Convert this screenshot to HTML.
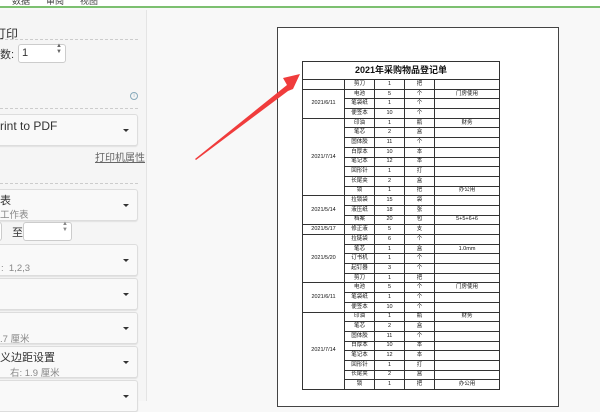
<!DOCTYPE html>
<html><head><meta charset="utf-8"><style>
*{margin:0;padding:0;box-sizing:border-box}
body{width:600px;height:401px;overflow:hidden;background:#f8f8f8;font-family:"Liberation Sans","Noto Sans CJK SC",sans-serif;position:relative}
.top{position:absolute;left:0;top:0;width:600px;height:8px;background:#fff;border-bottom:2px solid #7cc070}
.top span{position:absolute;top:-6px;font-size:9px;color:#444}
.left{position:absolute;left:0;top:10px;width:147px;height:391px;background:#f5f5f5;border-right:1px solid #e4e4e4}
.a{position:absolute;font-size:11px;color:#333;white-space:nowrap}
.s{font-size:9.5px;color:#888}
.dash{position:absolute;left:0;width:138px;border-top:1px dashed #ccc}
.dd{position:absolute;left:-4px;width:142px;height:32px;background:#f9f9f9;border:1px solid #ddd;border-radius:3px;box-shadow:0 1px 1px #e0e0e0}
.dd:after{content:"";position:absolute;right:8px;top:14px;border:3px solid transparent;border-top:3px solid #333}
.inp{position:absolute;background:#fff;border:1px solid #ccc;border-radius:3px}
.page{position:absolute;left:277px;top:27px;width:282px;height:380px;background:#fff;border:1px solid #444}
table{position:absolute;left:302px;top:61px;border-collapse:collapse;font-size:5.5px;color:#111;font-family:"Liberation Sans","Noto Sans CJK SC",sans-serif}
td{border:1px solid #333;height:9.69px;text-align:center;padding:0;line-height:7px}
.t{height:18px;font-size:9px;font-weight:bold}
</style></head><body>
<div class="top"><span style="left:12px">数据</span><span style="left:46px">审阅</span><span style="left:80px">视图</span></div>
<div class="left">
<div class="a" style="left:-6px;top:15px;font-size:12px">打印</div>
<div class="dash" style="top:29px"></div>
<div class="a" style="left:0;top:36px">数:</div>
<div class="inp" style="left:18px;top:34px;width:48px;height:19px"><span class="a" style="left:3px;top:2px">1</span><span class="a" style="right:3px;top:-2px;font-size:6px;color:#666">▲<br>▼</span></div>
<div class="a" style="left:130px;top:82px;width:8px;height:8px;border:1px solid #8ab;border-radius:50%;font-size:5px;color:#8ab;text-align:center;line-height:6px">i</div>
<div class="dash" style="top:98px"></div>
<div class="dd" style="top:104px"><span class="a" style="left:3px;top:4px;font-size:12px">rint to PDF</span></div>
<div class="a" style="left:95px;top:139px;font-size:10px;color:#666;text-decoration:underline">打印机属性</div>
<div class="dash" style="top:173px"></div>
<div class="dd" style="top:179px"><span class="a" style="left:3px;top:2px">表</span><span class="a s" style="left:3px;top:17px">工作表</span></div>
<div class="inp" style="left:-4px;top:212px;width:6px;height:19px"></div>
<div class="a" style="left:12px;top:214px">至</div>
<div class="inp" style="left:23px;top:212px;width:49px;height:19px"><span class="a" style="right:3px;top:-2px;font-size:6px;color:#888">▲<br>▼</span></div>
<div class="dd" style="top:234px"><span class="a s" style="left:4px;top:18px">: &nbsp;1,2,3</span></div>
<div class="dd" style="top:268px"></div>
<div class="dd" style="top:302px"><span class="a s" style="left:3px;top:18px">.7 厘米</span></div>
<div class="dd" style="top:336px"><span class="a" style="left:3px;top:2px">义边距设置</span><span class="a s" style="left:13px;top:18px">右: 1.9 厘米</span></div>
<div class="dd" style="top:370px"></div>
</div>
<div class="page"></div>
<table>
<colgroup><col style="width:42px"><col style="width:30px"><col style="width:30px"><col style="width:30px"><col style="width:65px"></colgroup>
<tr><td colspan="5" class="t">2021年采购物品登记单</td></tr>
<tr><td></td><td>剪刀</td><td>1</td><td>把</td><td></td></tr>
<tr><td rowspan="3">2021/6/11</td><td>电池</td><td>5</td><td>个</td><td>门房使用</td></tr>
<tr><td>笔袋纸</td><td>1</td><td>个</td><td></td></tr>
<tr><td>便签本</td><td>10</td><td>个</td><td></td></tr>
<tr><td rowspan="8">2021/7/14</td><td>印油</td><td>1</td><td>瓶</td><td>财务</td></tr>
<tr><td>笔芯</td><td>2</td><td>盒</td><td></td></tr>
<tr><td>固体胶</td><td>11</td><td>个</td><td></td></tr>
<tr><td>白厚本</td><td>10</td><td>本</td><td></td></tr>
<tr><td>笔记本</td><td>12</td><td>本</td><td></td></tr>
<tr><td>回形针</td><td>1</td><td>打</td><td></td></tr>
<tr><td>长尾夹</td><td>2</td><td>盒</td><td></td></tr>
<tr><td>锁</td><td>1</td><td>把</td><td>办公用</td></tr>
<tr><td rowspan="3">2021/5/14</td><td>拉锁袋</td><td>15</td><td>袋</td><td></td></tr>
<tr><td>液压纸</td><td>18</td><td>张</td><td></td></tr>
<tr><td>档案</td><td>20</td><td>包</td><td>5+5+6+6</td></tr>
<tr><td>2021/5/17</td><td>修正液</td><td>5</td><td>支</td><td></td></tr>
<tr><td rowspan="5">2021/5/20</td><td>拉链袋</td><td>6</td><td>个</td><td></td></tr>
<tr><td>笔芯</td><td>1</td><td>盒</td><td>1.0mm</td></tr>
<tr><td>订书机</td><td>1</td><td>个</td><td></td></tr>
<tr><td>起钉器</td><td>3</td><td>个</td><td></td></tr>
<tr><td>剪刀</td><td>1</td><td>把</td><td></td></tr>
<tr><td rowspan="3">2021/6/11</td><td>电池</td><td>5</td><td>个</td><td>门房使用</td></tr>
<tr><td>笔袋纸</td><td>1</td><td>个</td><td></td></tr>
<tr><td>便签本</td><td>10</td><td>个</td><td></td></tr>
<tr><td rowspan="8">2021/7/14</td><td>印油</td><td>1</td><td>瓶</td><td>财务</td></tr>
<tr><td>笔芯</td><td>2</td><td>盒</td><td></td></tr>
<tr><td>固体胶</td><td>11</td><td>个</td><td></td></tr>
<tr><td>白厚本</td><td>10</td><td>本</td><td></td></tr>
<tr><td>笔记本</td><td>12</td><td>本</td><td></td></tr>
<tr><td>回形针</td><td>1</td><td>打</td><td></td></tr>
<tr><td>长尾夹</td><td>2</td><td>盒</td><td></td></tr>
<tr><td>锁</td><td>1</td><td>把</td><td>办公用</td></tr>
</table>
<svg style="position:absolute;left:0;top:0" width="600" height="401"><polygon points="196,160 288,91 293,89 300,74 283,78 287,85 195,159" fill="#f03c3c"/></svg>
</body></html>
